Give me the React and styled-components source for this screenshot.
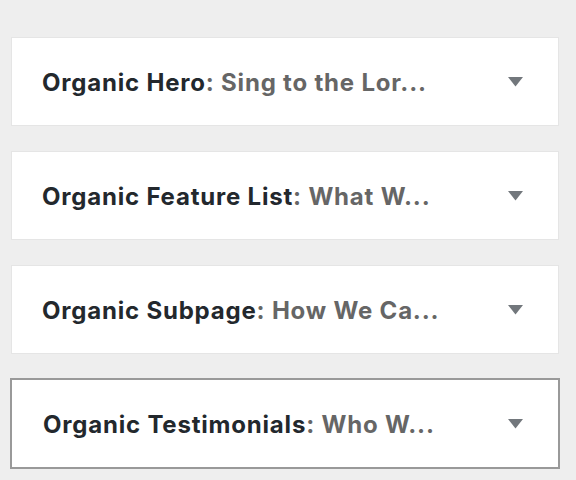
import React from 'react';
import styled, { createGlobalStyle } from 'styled-components';

const GlobalStyle = createGlobalStyle`
  html, body {
    margin: 0;
    padding: 0;
    background: #eeeeee;
  }
`;

const List = styled.ul`
  list-style: none;
  margin: 0;
  padding: 37px 0 0 11px;
  display: flex;
  flex-direction: column;
  gap: 25px;
  font-family: Inter, Roboto, "Liberation Sans", sans-serif;
`;

const Card = styled.li`
  box-sizing: border-box;
  width: ${(p) => (p.$focused ? '550px' : '548px')};
  height: ${(p) => (p.$focused ? '91px' : '89px')};
  margin: ${(p) => (p.$focused ? '-1px 0 0 -1px' : '0')};
  background: #fff;
  border: ${(p) => (p.$focused ? '2px solid #999' : '1px solid #e5e5e5')};
  display: flex;
  align-items: center;
  padding: 0 35px 0 ${(p) => (p.$focused ? '31px' : '30px')};
`;

const Title = styled.h3`
  flex: 1;
  margin: 0;
  font-size: 24px;
  line-height: 1;
  font-weight: 700;
  letter-spacing: 0.8px;
  color: #23282d;
  white-space: nowrap;
  padding-top: 2px;
`;

const Sub = styled.span`
  color: #666;
`;

const Arrow = styled.svg`
  width: 15px;
  height: 10px;
  fill: #72777c;
`;

const items = [
  { name: 'Organic Hero', sub: 'Sing to the Lor...' },
  { name: 'Organic Feature List', sub: 'What W...' },
  { name: 'Organic Subpage', sub: 'How We Ca...' },
  { name: 'Organic Testimonials', sub: 'Who W...', focused: true },
];

export default function App() {
  return (
    <>
      <GlobalStyle />
      <List>
        {items.map((it) => (
          <Card key={it.name} $focused={it.focused}>
            <Title>
              {it.name}
              <Sub>: {it.sub}</Sub>
            </Title>
            <Arrow viewBox="0 0 15 10">
              <polygon points="0,0 15,0 7.5,9.5" />
            </Arrow>
          </Card>
        ))}
      </List>
    </>
  );
}
